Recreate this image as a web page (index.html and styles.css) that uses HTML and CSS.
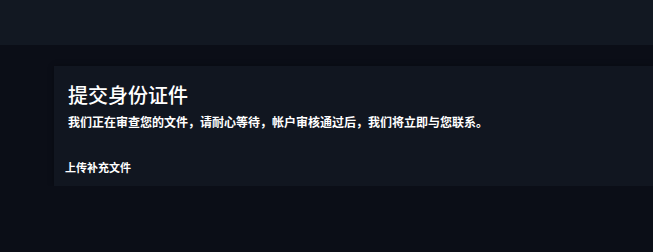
FILE: index.html
```html
<!DOCTYPE html>
<html lang="zh">
<head>
<meta charset="utf-8">
<link rel="stylesheet" href="styles.css">
</head>
<body>
<header class="topbar"></header>
<main class="main">
  <section class="card">
    <h1 class="title">提交身份证件</h1>
    <p class="subtitle">我们正在审查您的文件，请耐心等待，帐户审核通过后，我们将立即与您联系。</p>
    <div class="upload">上传补充文件</div>
  </section>
</main>
</body>
</html>
```
FILE: styles.css
```css
html, body {
  margin: 0;
  padding: 0;
  background: #0b0e17;
  font-family: "Noto Sans CJK SC", "Noto Sans", sans-serif;
  color: #ffffff;
}
.topbar {
  height: 45px;
  background: #121822;
}
.main {
  padding: 21px 0 0 54px;
}
.card {
  background: #111620;
  padding: 15px 14px 0 14px;
  box-sizing: border-box;
  height: 120px;
  box-shadow: 0 0 6px rgba(0,0,0,0.3);
}
.title {
  margin: 0;
  font-size: 20px;
  font-weight: 500;
  line-height: 28px;
}
.subtitle {
  margin: 5px 0 0 0;
  font-size: 12px;
  font-weight: 700;
  line-height: 16px;
}
.upload {
  margin: 29px 0 0 -3px;
  font-size: 11px;
  font-weight: 700;
  line-height: 16px;
}
```
